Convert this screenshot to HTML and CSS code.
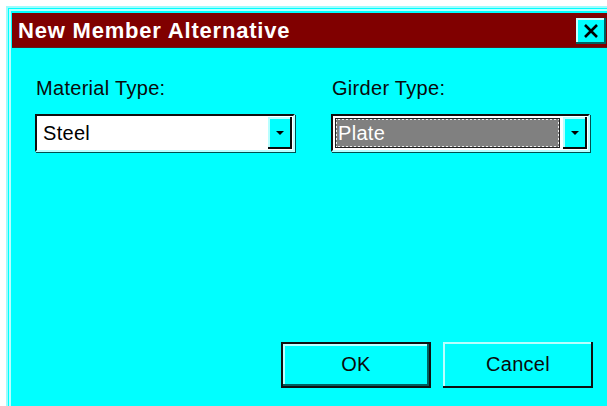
FILE: index.html
```html
<!DOCTYPE html>
<html lang="en">
<head>
<meta charset="utf-8">
<title>New Member Alternative</title>
<link rel="stylesheet" href="styles.css">
</head>
<body>
<div class="window">
  <div class="titlebar">
    <span class="title">New Member Alternative</span>
    <button class="close" aria-label="Close">
      <svg width="16" height="14" viewBox="0 0 16 14"><path d="M2 1 L14 13 M14 1 L2 13" stroke="#000" stroke-width="2.6" fill="none"/></svg>
    </button>
  </div>
  <div class="client">
    <div class="fields">
      <div class="field">
        <label class="label">Material Type:</label>
        <div class="combo">
          <div class="value">Steel</div>
          <div class="drop"><span class="arrow"></span></div>
        </div>
      </div>
      <div class="field">
        <label class="label">Girder Type:</label>
        <div class="combo">
          <div class="value selected"><span>Plate</span></div>
          <div class="drop"><span class="arrow"></span></div>
        </div>
      </div>
    </div>
    <div class="actions">
      <button class="btn default"><span>OK</span></button>
      <button class="btn"><span>Cancel</span></button>
    </div>
  </div>
</div>
</body>
</html>
```

FILE: styles.css
```css
html {
  background: #ffffff;
  overflow: hidden;
}

html, body {
  margin: 0;
  padding: 0;
}

body {
  font-family: "Liberation Sans", Arial, sans-serif;
  color: #000;
}

/* dialog frame: only its top and left edges fall inside the view */
.window {
  margin: 6px 0 0 6px;
  width: calc(100vw - 6px);
  height: calc(100vh - 6px);
  box-sizing: border-box;
  background: #00ffff;
  border-top: 2px solid #9ffcfc;
  border-left: 2px solid #9ffcfc;
  box-shadow: inset 1px 1px 0 #00ffff, inset 3px 3px 0 #b8ffff;
  padding: 5px 0 0 4px;
}

.titlebar {
  width: 595px;
  height: 35px;
  box-sizing: border-box;
  background: #800000;
  display: flex;
  align-items: center;
  justify-content: space-between;
  padding-left: 6px;
  box-shadow: inset 0 -1px 0 #5a2020;
}

.title {
  color: #fff;
  font-weight: bold;
  font-size: 22px;
  letter-spacing: 0.8px;
  line-height: 24px;
}

.close {
  width: 30px;
  height: 26px;
  margin-right: 1px;
  padding: 0;
  background: #00ffff;
  border: none;
  box-shadow: inset -2px -2px 0 #006060, inset 2px 2px 0 #c8ffff;
  display: flex;
  align-items: center;
  justify-content: center;
}

.client {
  width: 595px;
  box-sizing: border-box;
  padding: 28px 14px 0 23px;
}

.fields {
  display: flex;
  gap: 36px;
}

.field {
  display: flex;
  flex-direction: column;
  gap: 14px;
}

.label {
  font-size: 20px;
  letter-spacing: 0.3px;
  line-height: 24px;
  color: #0a0a0a;
  padding-left: 1px;
}

.combo {
  width: 260px;
  height: 38px;
  box-sizing: border-box;
  background: #fff;
  border-top: 2px solid #101010;
  border-left: 2px solid #101010;
  border-right: 2px solid #b8ffff;
  border-bottom: 2px solid #b8ffff;
  box-shadow: 1px 1px 0 #005050;
  display: flex;
  padding: 1px;
}

.field:last-child .combo {
  width: 259px;
}

.value {
  flex: 1;
  display: flex;
  align-items: center;
  padding-left: 5px;
  font-size: 20px;
  letter-spacing: 0.3px;
}

.value.selected {
  padding: 1px;
  margin-right: 2px;
}

.value.selected span {
  flex: 1;
  height: 100%;
  box-sizing: border-box;
  background: #808080;
  color: #fff;
  border: 2px dotted #f0f0f0;
  outline: 1px solid #202020;
  outline-offset: -1px;
  display: flex;
  align-items: center;
  padding-left: 1px;
}

.drop {
  width: 24px;
  background: #00ffff;
  box-shadow: inset -2px -2px 0 #0c0c0c, inset 2px 2px 0 #b8ffff;
  display: flex;
  align-items: center;
  justify-content: center;
}

.arrow {
  width: 0;
  height: 0;
  border-left: 4px solid transparent;
  border-right: 4px solid transparent;
  border-top: 4px solid #000;
  margin-bottom: 1px;
}

.actions {
  margin-top: 190px;
  display: flex;
  justify-content: flex-end;
  gap: 12px;
}

.btn {
  width: 150px;
  height: 46px;
  padding: 0;
  background: #00ffff;
  border: none;
  font-family: "Liberation Sans", Arial, sans-serif;
  font-size: 20px;
  letter-spacing: 0.3px;
  color: #0a0a0a;
  box-shadow: inset -2px -2px 0 #101010, inset 2px 2px 0 #b8ffff;
  display: flex;
  align-items: center;
  justify-content: center;
}

.btn.default {
  border: 2px solid #101010;
  box-shadow: inset -2px -2px 0 #006060, inset 2px 2px 0 #b8ffff;
}

.btn span {
  padding-bottom: 2px;
}
```
